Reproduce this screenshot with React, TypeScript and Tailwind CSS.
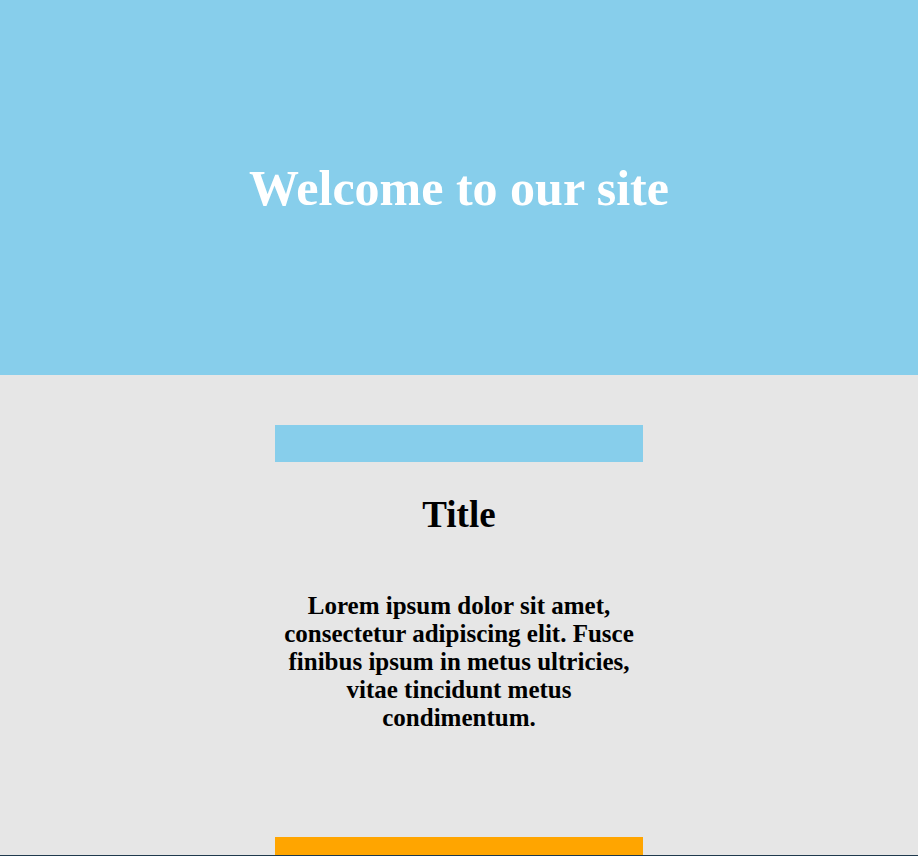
export default function App() {
  return (
    <div className="w-[918px] font-['Liberation_Serif','Times_New_Roman',serif]">
      <header className="h-[375px] bg-[#87ceeb] flex items-center justify-center">
        <h1 className="text-[50px] font-bold text-white leading-[normal]">Welcome to our site</h1>
      </header>
      <section className="bg-[#e6e6e6] pt-[50px] flex justify-center">
        <div className="w-[368px] flex flex-col">
          <div className="h-[37px] bg-[#87ceeb]" />
          <h2 className="mt-[32px] text-[37px] font-bold text-black text-center leading-[41px]">Title</h2>
          <p className="mt-[57px] px-[6px] text-[25px] font-bold text-black text-center leading-[28px]">
            Lorem ipsum dolor sit amet, consectetur adipiscing elit. Fusce finibus ipsum in metus ultricies, vitae tincidunt metus condimentum.
          </p>
          <div className="mt-[105px] h-[18px] bg-[#ffa500]" />
        </div>
      </section>
      <footer className="h-[200px] bg-[#1f3a4d]" />
    </div>
  );
}
